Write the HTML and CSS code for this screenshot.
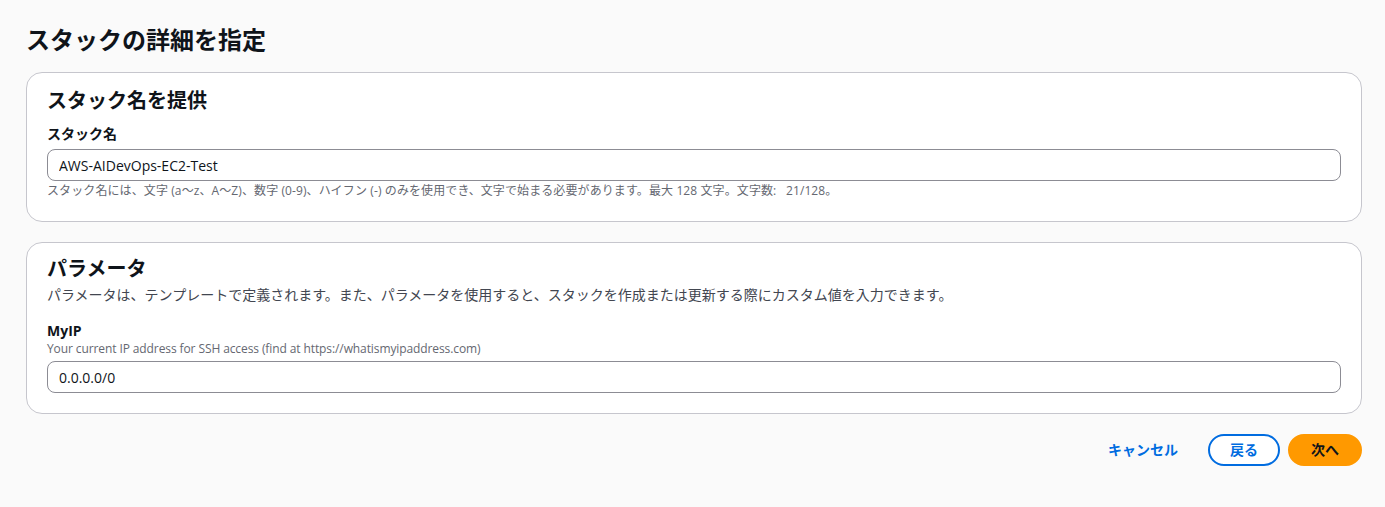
FILE: index.html
```html
<!DOCTYPE html>
<html lang="ja">
<head>
<meta charset="utf-8">
<title>スタックの詳細を指定</title>
<link rel="stylesheet" href="styles.css">
</head>
<body>
<main class="page">
  <h1 class="page-title">スタックの詳細を指定</h1>

  <section class="card card-name">
    <h2 class="card-title">スタック名を提供</h2>
    <div class="field">
      <label class="field-label" for="stackname">スタック名</label>
      <input class="text-input" id="stackname" type="text" value="AWS-AIDevOps-EC2-Test">
      <p class="field-hint">スタック名には、文字 (a～z、A～Z)、数字 (0-9)、ハイフン (-) のみを使用でき、文字で始まる必要があります。最大 128 文字。文字数:&nbsp;&nbsp; 21/128。</p>
    </div>
  </section>

  <section class="card card-params">
    <h2 class="card-title">パラメータ</h2>
    <p class="card-desc">パラメータは、テンプレートで定義されます。また、パラメータを使用すると、スタックを作成または更新する際にカスタム値を入力できます。</p>
    <div class="field field-param">
      <label class="field-label" for="myip">MyIP</label>
      <p class="field-desc">Your current IP address for SSH access (find at https://whatismyipaddress.com)</p>
      <input class="text-input" id="myip" type="text" value="0.0.0.0/0">
    </div>
  </section>

  <div class="actions">
    <button class="btn btn-link" type="button">キャンセル</button>
    <button class="btn btn-normal" type="button">戻る</button>
    <button class="btn btn-primary" type="button">次へ</button>
  </div>
</main>
</body>
</html>
```

FILE: styles.css
```css
* {
  box-sizing: border-box;
}

html, body {
  margin: 0;
  padding: 0;
  background: #fafafa;
}

body {
  font-family: "Open Sans", "Noto Sans CJK JP", sans-serif;
  color: #0f141a;
  font-size: 14px;
  line-height: 22px;
}

.page {
  padding: 25px 23px 20px 26px;
}

.page-title {
  margin: 0 0 17px;
  font-size: 24px;
  line-height: 30px;
  font-weight: 700;
  letter-spacing: 0;
}

.card {
  background: #ffffff;
  border: 1px solid #c6c6cd;
  border-radius: 16px;
  padding: 16px 20px 22px;
  margin-bottom: 20px;
}

.card-params {
  padding-top: 14px;
  padding-bottom: 20px;
}

.card-title {
  margin: 0;
  font-size: 20px;
  line-height: 24px;
  font-weight: 700;
}

.card-desc {
  margin: 3px 0 0;
  font-size: 14px;
  line-height: 22px;
  color: #424650;
}

.field {
  display: flex;
  flex-direction: column;
  margin-top: 10px;
}

.field-param {
  margin-top: 14px;
}

.field-label {
  font-size: 14px;
  line-height: 22px;
  font-weight: 700;
  margin-bottom: 4px;
}

.field-param .field-label {
  margin-bottom: 0;
}

.field-desc {
  margin: -1px 0 4px;
  font-size: 12px;
  line-height: 16px;
  color: #656871;
  letter-spacing: -0.1px;
}

.text-input {
  width: 100%;
  height: 32px;
  border: 1px solid #8c8c94;
  border-radius: 8px;
  background: #ffffff;
  padding: 4px 11px;
  font-family: "Open Sans", "Noto Sans CJK JP", sans-serif;
  font-size: 14px;
  line-height: 22px;
  color: #0f141a;
  outline: none;
}

.field-hint {
  margin: 2px 0 0;
  font-size: 12px;
  line-height: 16px;
  color: #656871;
  letter-spacing: 0.1px;
}

.actions {
  display: flex;
  justify-content: flex-end;
  align-items: center;
  gap: 8px;
  margin-top: 20px;
}

.btn {
  font-family: "Open Sans", "Noto Sans CJK JP", sans-serif;
  font-size: 14px;
  line-height: 22px;
  font-weight: 700;
  height: 32px;
  padding: 3px 20px;
  border-radius: 20px;
  border: 2px solid transparent;
  background: transparent;
  cursor: pointer;
}

.btn-link {
  color: #006ce0;
}

.btn-normal {
  color: #006ce0;
  border-color: #006ce0;
  background: #ffffff;
}

.btn-primary {
  background: #ff9900;
  border-color: #ff9900;
  color: #0f141a;
  padding: 3px 21px;
}
```
